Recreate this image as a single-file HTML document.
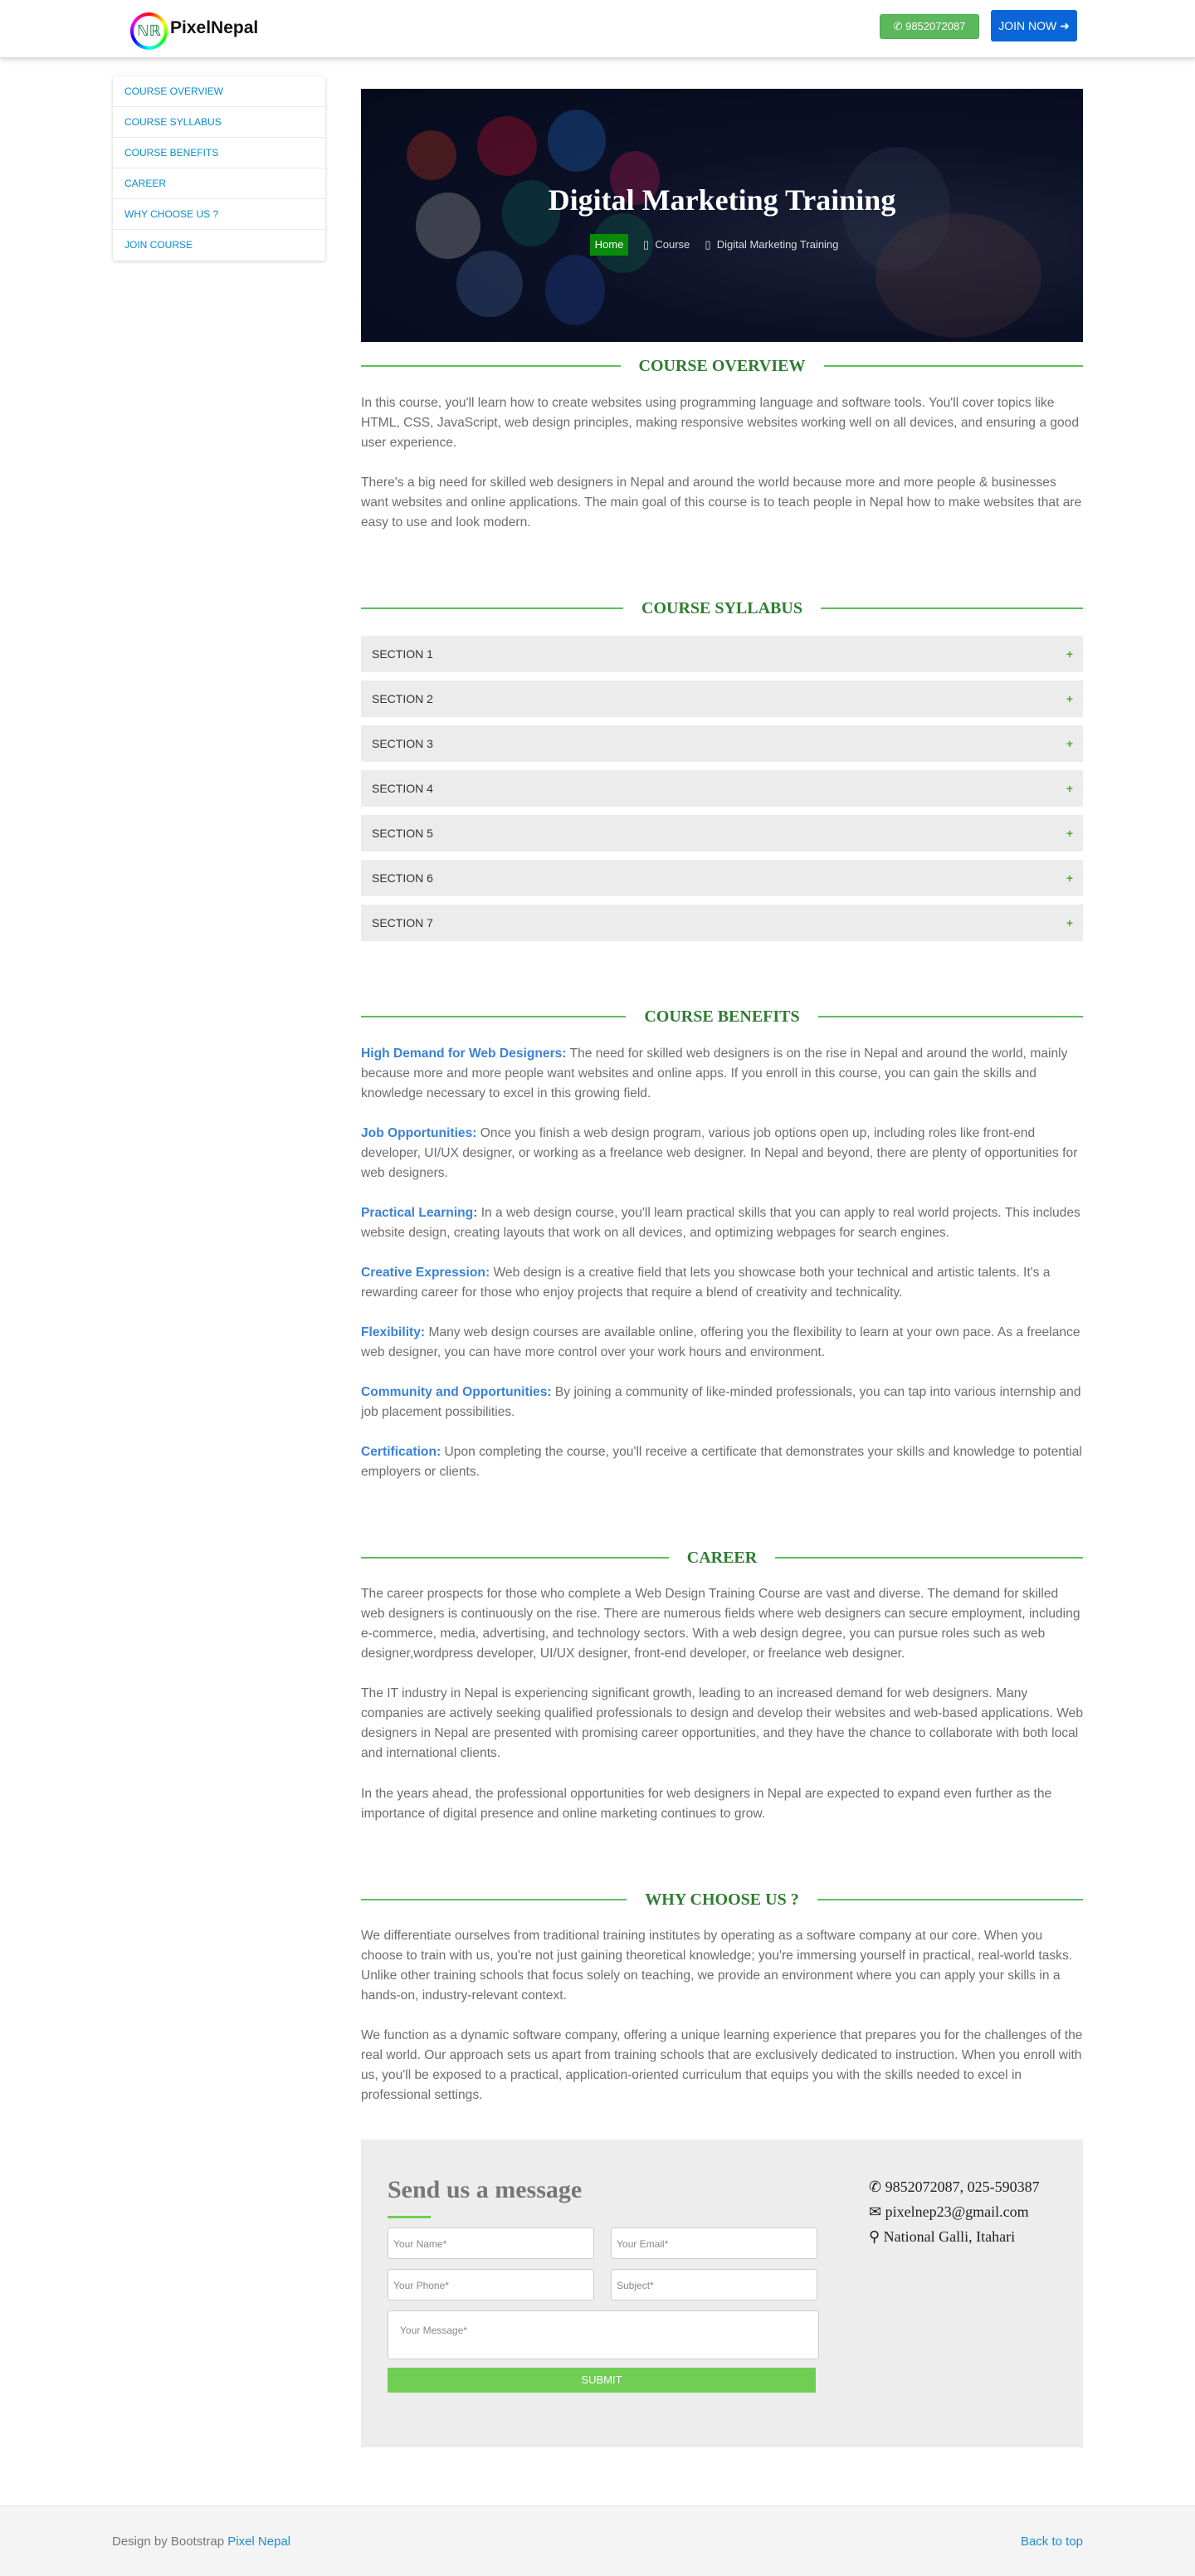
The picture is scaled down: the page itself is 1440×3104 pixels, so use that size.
<!DOCTYPE html>
<html><head><meta charset="utf-8">
<style>
*{box-sizing:border-box;margin:0;padding:0}
body{width:1440px;height:3104px;position:relative;background:#fff;font-family:"Liberation Sans",Arial,sans-serif;overflow:hidden}
.abs{position:absolute}
header{position:absolute;left:0;top:0;width:1440px;height:70px;background:#fff;box-shadow:0 2px 6px rgba(0,0,0,.18);border-bottom:1px solid #ddd}
.side{position:absolute;left:136px;top:92px;width:256px;background:#fff;box-shadow:0 1px 4px rgba(0,0,0,.2);border-radius:3px}
.side div{height:37px;border-bottom:1px solid #e8e8e8;color:#0a8ccf;font-size:12px;line-height:37px;padding-left:14px}
.side div:last-child{border-bottom:none}
.hero{position:absolute;left:435px;top:107px;width:870px;height:305px;background:radial-gradient(ellipse at 75% 60%,#1d2238 0%,#0b1026 45%,#060a1c 100%);overflow:hidden}
.c{position:absolute;border-radius:50%;opacity:.4}
.h{position:absolute;left:435px;width:870px;height:30px}
.h:before{content:"";position:absolute;left:0;right:0;top:14px;height:2px;background:#5cbf5c}
.h span{position:relative;display:block;margin:0 auto;width:max-content;background:#fff;padding:0 22px;font-family:"Liberation Serif",serif;font-weight:bold;font-size:20px;color:#2e7d32;line-height:30px}
.p{position:absolute;left:435px;width:872px;font-size:15.6px;line-height:24px;color:#6d6d6d}
.p b{color:#3b82d6;font-weight:bold}
.sec{position:absolute;left:435px;width:870px;height:44px;background:#ececec;font-size:14px;color:#333;line-height:44px;padding-left:13px}
.sec i{position:absolute;right:12px;top:0;color:#4caf1a;font-style:normal;font-size:14px;font-weight:bold}
.inp{position:absolute;height:38px;background:#fff;border:1px solid #ccc;border-radius:3px;font-size:12px;color:#888;padding:12px 6px;line-height:14px}
</style></head><body>
<header>
 <div class="abs" style="left:157px;top:15px;width:45px;height:45px;border-radius:50%;background:conic-gradient(#f00,#ff0,#0f0,#0ff,#00f,#f0f,#f00)"></div>
 <div class="abs" style="left:161px;top:19px;width:37px;height:37px;border-radius:50%;background:#fff;color:#1d7a4a;font-size:18px;line-height:37px;text-align:center;font-family:'Liberation Serif',serif">ℕℝ</div>
 <div class="abs" style="left:205px;top:22px;font-size:21px;font-weight:bold;color:#111">PixelNepal</div>
 <div class="abs" style="left:1060px;top:17px;width:120px;height:30px;background:#5cb85c;border:1px solid #4cae4c;border-radius:3px;color:#fff;font-size:13px;line-height:28px;text-align:center">✆ 9852072087</div>
 <div class="abs" style="left:1194px;top:12px;width:104px;height:38px;background:#0a66d8;border-radius:3px;color:#fff;font-size:14px;line-height:38px;text-align:center">JOIN NOW ➜</div>
</header>

<div class="side">
 <div>COURSE OVERVIEW</div><div>COURSE SYLLABUS</div><div>COURSE BENEFITS</div><div>CAREER</div><div>WHY CHOOSE US ?</div><div>JOIN COURSE</div>
</div>

<div class="hero">
 <div class="c" style="left:55px;top:50px;width:60px;height:60px;background:#a3311f"></div>
 <div class="c" style="left:140px;top:33px;width:72px;height:72px;background:#b0102a"></div>
 <div class="c" style="left:225px;top:25px;width:70px;height:75px;background:#1d5aa8"></div>
 <div class="c" style="left:300px;top:75px;width:60px;height:65px;background:#a0184a"></div>
 <div class="c" style="left:170px;top:110px;width:70px;height:80px;background:#0f5a55"></div>
 <div class="c" style="left:66px;top:125px;width:78px;height:80px;background:#8b8b8b"></div>
 <div class="c" style="left:115px;top:195px;width:80px;height:80px;background:#3a5a85"></div>
 <div class="c" style="left:222px;top:200px;width:72px;height:85px;background:#1c3e88"></div>
 <div class="c" style="left:280px;top:150px;width:72px;height:72px;background:#0f5a45"></div>
 <div class="c" style="left:580px;top:70px;width:130px;height:150px;background:#2b3248;opacity:.4"></div>
 <div class="c" style="left:620px;top:150px;width:200px;height:150px;background:#5a3a35;opacity:.25"></div>
 <div class="abs" style="left:0;top:113px;width:870px;text-align:center;font-family:'Liberation Serif',serif;font-weight:bold;font-size:36px;color:#fff">Digital Marketing Training</div>
 <div class="abs" style="left:276px;top:175px;width:46px;height:26px;background:#0a8a0a;color:#fff;font-size:13px;line-height:26px;text-align:center">Home</div>
 <div class="abs" style="left:340px;top:175px;color:#ddd;font-size:13px;line-height:26px">▯&nbsp; Course &nbsp;&nbsp;&nbsp; ▯&nbsp; Digital Marketing Training</div>
</div>

<div class="h" style="top:426px"><span>COURSE OVERVIEW</span></div>
<div class="p" style="top:474px">In this course, you'll learn how to create websites using programming language and software tools. You'll cover topics like HTML, CSS, JavaScript, web design principles, making responsive websites working well on all devices, and ensuring a good user experience.</div>
<div class="p" style="top:570px">There's a big need for skilled web designers in Nepal and around the world because more and more people &amp; businesses want websites and online applications. The main goal of this course is to teach people in Nepal how to make websites that are easy to use and look modern.</div>

<div class="h" style="top:718px"><span>COURSE SYLLABUS</span></div>
<div class="sec" style="top:766px">SECTION 1<i>+</i></div>
<div class="sec" style="top:820px">SECTION 2<i>+</i></div>
<div class="sec" style="top:874px">SECTION 3<i>+</i></div>
<div class="sec" style="top:928px">SECTION 4<i>+</i></div>
<div class="sec" style="top:982px">SECTION 5<i>+</i></div>
<div class="sec" style="top:1036px">SECTION 6<i>+</i></div>
<div class="sec" style="top:1090px">SECTION 7<i>+</i></div>

<div class="h" style="top:1210px"><span>COURSE BENEFITS</span></div>
<div class="p" style="top:1258px"><b>High Demand for Web Designers:</b> The need for skilled web designers is on the rise in Nepal and around the world, mainly because more and more people want websites and online apps. If you enroll in this course, you can gain the skills and knowledge necessary to excel in this growing field.</div>
<div class="p" style="top:1354px"><b>Job Opportunities:</b> Once you finish a web design program, various job options open up, including roles like front-end developer, UI/UX designer, or working as a freelance web designer. In Nepal and beyond, there are plenty of opportunities for web designers.</div>
<div class="p" style="top:1450px"><b>Practical Learning:</b> In a web design course, you'll learn practical skills that you can apply to real world projects. This includes website design, creating layouts that work on all devices, and optimizing webpages for search engines.</div>
<div class="p" style="top:1522px"><b>Creative Expression:</b> Web design is a creative field that lets you showcase both your technical and artistic talents. It's a rewarding career for those who enjoy projects that require a blend of creativity and technicality.</div>
<div class="p" style="top:1594px"><b>Flexibility:</b> Many web design courses are available online, offering you the flexibility to learn at your own pace. As a freelance web designer, you can have more control over your work hours and environment.</div>
<div class="p" style="top:1666px"><b>Community and Opportunities:</b> By joining a community of like-minded professionals, you can tap into various internship and job placement possibilities.</div>
<div class="p" style="top:1738px"><b>Certification:</b> Upon completing the course, you'll receive a certificate that demonstrates your skills and knowledge to potential employers or clients.</div>

<div class="h" style="top:1862px"><span>CAREER</span></div>
<div class="p" style="top:1909px">The career prospects for those who complete a Web Design Training Course are vast and diverse. The demand for skilled web designers is continuously on the rise. There are numerous fields where web designers can secure employment, including e-commerce, media, advertising, and technology sectors. With a web design degree, you can pursue roles such as web designer,wordpress developer, UI/UX designer, front-end developer, or freelance web designer.</div>
<div class="p" style="top:2029px">The IT industry in Nepal is experiencing significant growth, leading to an increased demand for web designers. Many companies are actively seeking qualified professionals to design and develop their websites and web-based applications. Web designers in Nepal are presented with promising career opportunities, and they have the chance to collaborate with both local and international clients.</div>
<div class="p" style="top:2150px">In the years ahead, the professional opportunities for web designers in Nepal are expected to expand even further as the importance of digital presence and online marketing continues to grow.</div>

<div class="h" style="top:2274px"><span>WHY CHOOSE US ?</span></div>
<div class="p" style="top:2321px">We differentiate ourselves from traditional training institutes by operating as a software company at our core. When you choose to train with us, you're not just gaining theoretical knowledge; you're immersing yourself in practical, real-world tasks. Unlike other training schools that focus solely on teaching, we provide an environment where you can apply your skills in a hands-on, industry-relevant context.</div>
<div class="p" style="top:2441px">We function as a dynamic software company, offering a unique learning experience that prepares you for the challenges of the real world. Our approach sets us apart from training schools that are exclusively dedicated to instruction. When you enroll with us, you'll be exposed to a practical, application-oriented curriculum that equips you with the skills needed to excel in professional settings.</div>

<div class="abs" style="left:435px;top:2578px;width:870px;height:371px;background:#ededed">
 <div class="abs" style="left:32px;top:44px;font-family:'Liberation Serif',serif;font-weight:bold;font-size:30px;color:#777">Send us a message</div>
 <div class="abs" style="left:32px;top:92px;width:52px;height:3px;background:#6fcf55"></div>
 <div class="inp" style="left:32px;top:106px;width:249px">Your Name*</div>
 <div class="inp" style="left:301px;top:106px;width:249px">Your Email*</div>
 <div class="inp" style="left:32px;top:156px;width:249px">Your Phone*</div>
 <div class="inp" style="left:301px;top:156px;width:249px">Subject*</div>
 <div class="inp" style="left:32px;top:206px;width:520px;height:59px;padding:16px 14px">Your Message*</div>
 <div class="abs" style="left:32px;top:275px;width:516px;height:30px;background:#6fcf55;color:#fff;font-size:13px;line-height:30px;text-align:center">SUBMIT</div>
 <div class="abs" style="left:612px;top:42px;font-family:'Liberation Serif',serif;font-size:18px;color:#222;line-height:30px">✆ 9852072087, 025-590387<br>✉ pixelnep23@gmail.com<br>⚲ National Galli, Itahari</div>
</div>

<div class="abs" style="left:0;top:3019px;width:1440px;height:85px;background:#f4f4f4;border-top:1px solid #e2e2e2">
 <div class="abs" style="left:135px;top:34px;font-size:15px;color:#777">Design by Bootstrap <span style="color:#1a8fd1">Pixel Nepal</span></div>
 <div class="abs" style="right:135px;top:34px;font-size:15px;color:#1a8fd1">Back to top</div>
</div>
</body></html>
